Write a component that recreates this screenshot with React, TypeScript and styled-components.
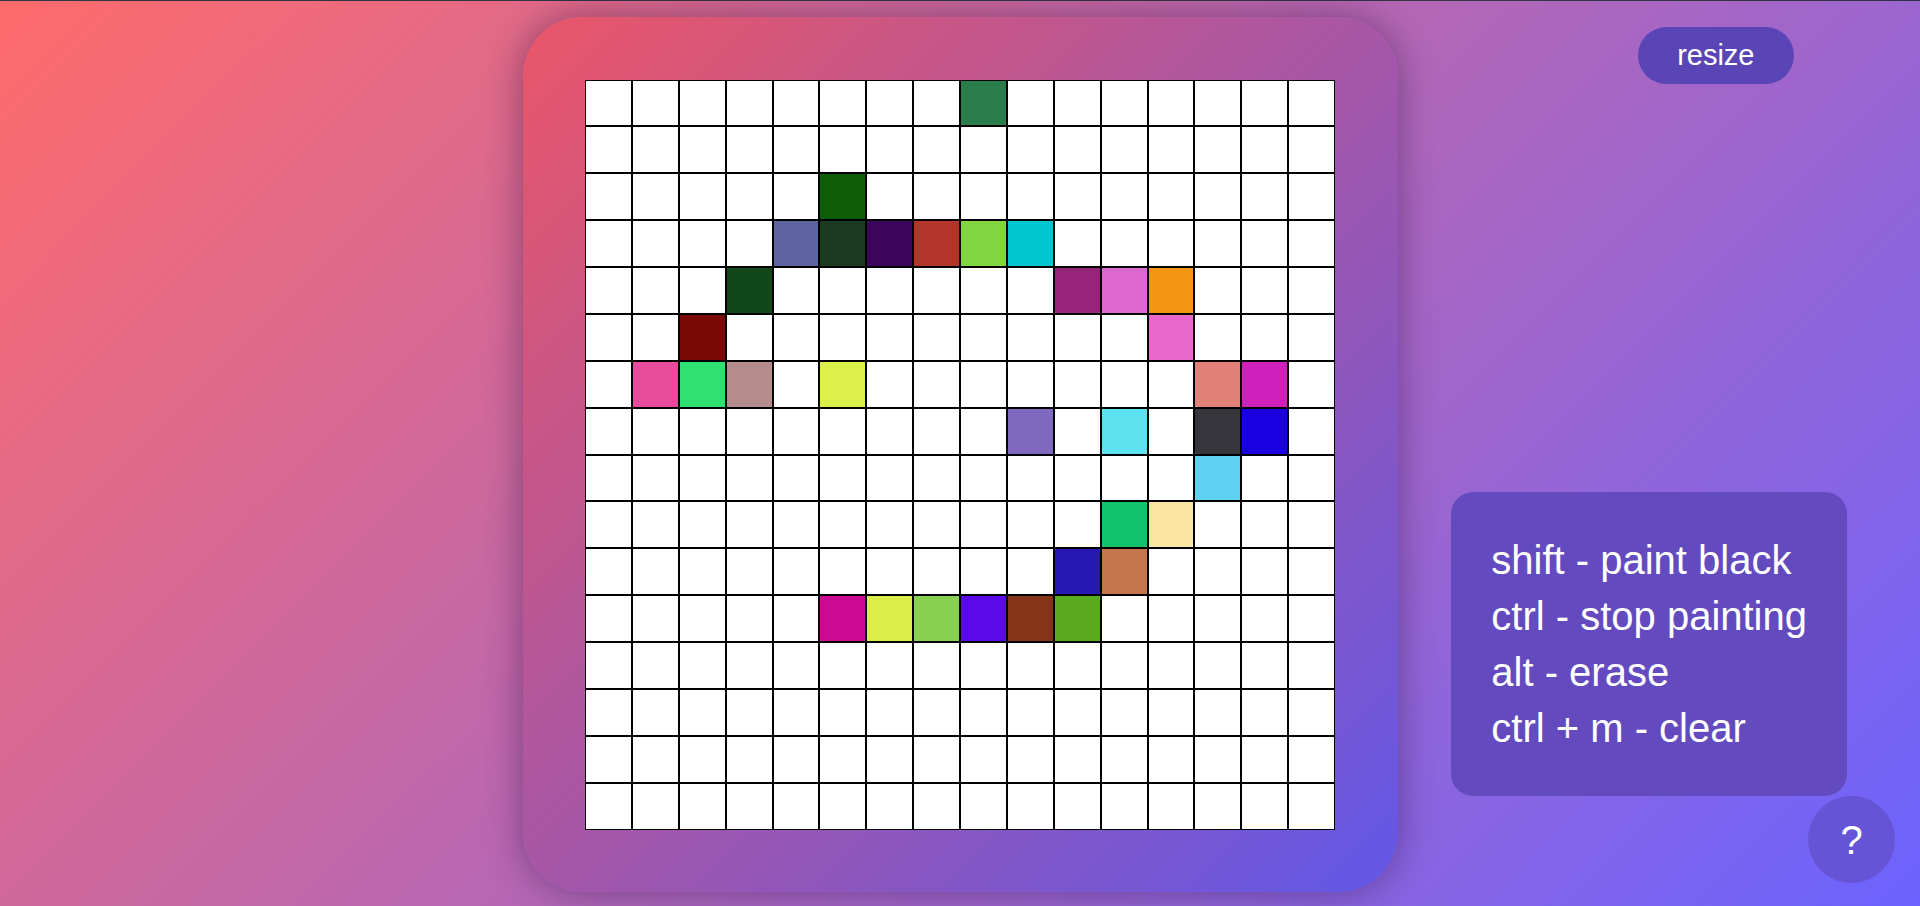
import React from "react";
import styled, { createGlobalStyle } from "styled-components";

const GlobalStyle = createGlobalStyle`
  html, body {
    margin: 0;
    padding: 0;
  }
  body {
    font-family: "Liberation Sans", Arial, sans-serif;
    overflow: hidden;
  }
  * {
    box-sizing: border-box;
  }
`;

const Page = styled.main`
  position: relative;
  height: 100vh;
  padding-top: 2px;
  border-top: 1px solid #2f3541;
  background: linear-gradient(135deg, #ff6b6b 0%, #6c63ff 100%);
  display: flex;
  align-items: center;
  justify-content: center;
`;

const Board = styled.section`
  width: 875px;
  height: 875px;
  padding: 62.5px;
  border-radius: 60px;
  background: linear-gradient(135deg, #ea5667 0%, #6157e7 100%);
  box-shadow: 0 0 36px rgba(40, 15, 60, 0.45);
`;

const Grid = styled.div`
  width: 750px;
  height: 750px;
  display: grid;
  grid-template-columns: repeat(16, 1fr);
  grid-template-rows: repeat(16, 1fr);
  background: #ffffff;
`;

const Cell = styled.div<{ $color: string }>`
  border: 1px solid #000000;
  background: ${(p) => p.$color};
`;

const ResizeButton = styled.button`
  position: absolute;
  top: 26px;
  right: 126px;
  height: 57px;
  padding: 0 39.5px;
  border: none;
  border-radius: 29px;
  background: #5a45b6;
  color: #ffffff;
  font-family: "Liberation Sans", Arial, sans-serif;
  font-size: 29px;
  line-height: 1;
  cursor: pointer;
`;

const HelpPanel = styled.aside`
  position: absolute;
  right: 73px;
  bottom: 110px;
  padding: 40px;
  border-radius: 22px;
  background: #634bbf;
  color: #ffffff;
  font-size: 40px;
  line-height: 56px;
  white-space: nowrap;
`;

const HelpLine = styled.div``;

const HelpButton = styled.button`
  position: absolute;
  right: 25px;
  bottom: 23px;
  width: 87px;
  height: 87px;
  border: none;
  border-radius: 50%;
  background: #6554d6;
  color: #ffffff;
  font-family: "Liberation Sans", Arial, sans-serif;
  font-size: 40px;
  line-height: 1;
  display: flex;
  align-items: center;
  justify-content: center;
  padding: 0;
  cursor: pointer;
`;

const painted: Record<string, string> = {
  "0-8": "#287d4a",
  "2-5": "#0e5c06",
  "3-4": "#5e64a0",
  "3-5": "#1b3a1f",
  "3-6": "#3c065c",
  "3-7": "#b33428",
  "3-8": "#80d540",
  "3-9": "#00c6d0",
  "4-3": "#10481a",
  "4-10": "#95247a",
  "4-11": "#dc68d0",
  "4-12": "#f59514",
  "5-2": "#7a0a08",
  "5-12": "#e868cc",
  "6-1": "#e84a9c",
  "6-2": "#30e070",
  "6-3": "#b48c8c",
  "6-5": "#dcf04c",
  "6-13": "#e08076",
  "6-14": "#d020bc",
  "7-9": "#7e68c0",
  "7-11": "#5ce2ee",
  "7-13": "#36353b",
  "7-14": "#1a00e0",
  "8-13": "#5ed2f0",
  "9-11": "#10c46e",
  "9-12": "#fae6a2",
  "10-10": "#2618b2",
  "10-11": "#c6764c",
  "11-5": "#cc0a94",
  "11-6": "#dcee4a",
  "11-7": "#88d050",
  "11-8": "#5a0ae6",
  "11-9": "#863418",
  "11-10": "#5aaa20",
};

const SIZE = 16;

const shortcuts = [
  "shift - paint black",
  "ctrl - stop painting",
  "alt - erase",
  "ctrl + m - clear",
];

export default function App() {
  const cells: React.ReactNode[] = [];
  for (let r = 0; r < SIZE; r++) {
    for (let c = 0; c < SIZE; c++) {
      const key = `${r}-${c}`;
      cells.push(<Cell key={key} $color={painted[key] ?? "#ffffff"} />);
    }
  }

  return (
    <>
      <GlobalStyle />
      <Page>
        <Board>
          <Grid>{cells}</Grid>
        </Board>
        <ResizeButton>resize</ResizeButton>
        <HelpPanel>
          {shortcuts.map((s) => (
            <HelpLine key={s}>{s}</HelpLine>
          ))}
        </HelpPanel>
        <HelpButton>?</HelpButton>
      </Page>
    </>
  );
}
